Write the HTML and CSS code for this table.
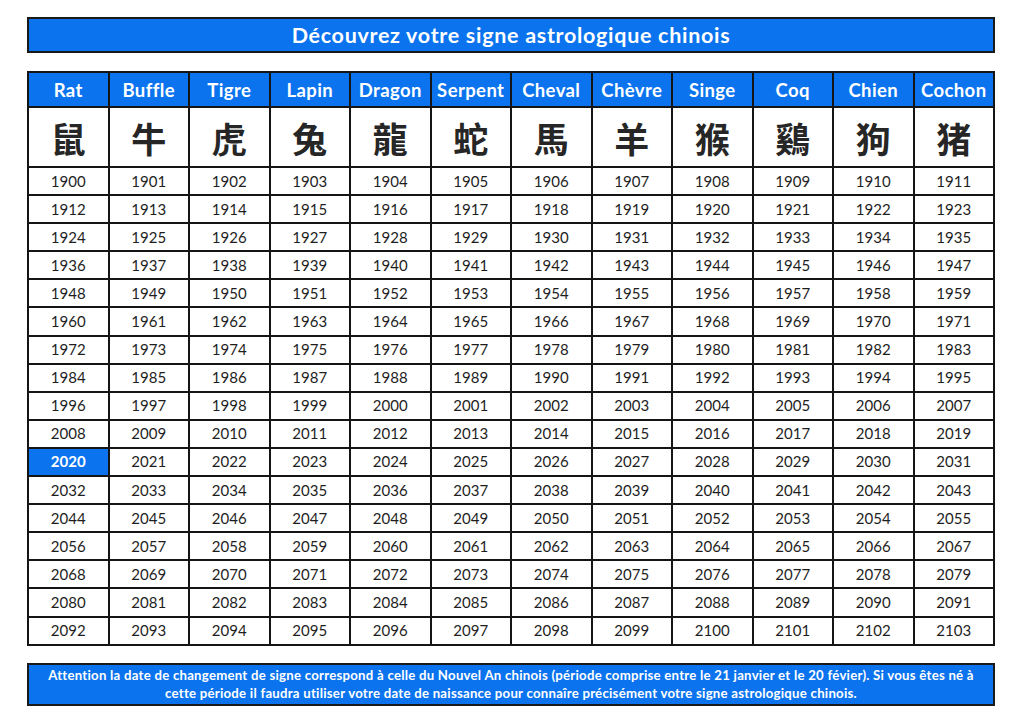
FILE: index.html
```html
<!DOCTYPE html>
<html lang="fr">
<head>
<meta charset="utf-8">
<title>Découvrez votre signe astrologique chinois</title>
<link rel="stylesheet" href="styles.css">
</head>
<body>
<div class="page">
  <h1 class="title">Découvrez votre signe astrologique chinois</h1>
  <table class="zodiac">
    <thead>
      <tr class="names">
        <th>Rat</th><th>Buffle</th><th>Tigre</th><th>Lapin</th><th>Dragon</th><th>Serpent</th><th>Cheval</th><th>Chèvre</th><th>Singe</th><th>Coq</th><th>Chien</th><th>Cochon</th>
      </tr>
      <tr class="hanzi">
        <td>鼠</td><td>牛</td><td>虎</td><td>兔</td><td>龍</td><td>蛇</td><td>馬</td><td>羊</td><td>猴</td><td>鷄</td><td>狗</td><td>猪</td>
      </tr>
    </thead>
    <tbody>
      <tr><td>1900</td><td>1901</td><td>1902</td><td>1903</td><td>1904</td><td>1905</td><td>1906</td><td>1907</td><td>1908</td><td>1909</td><td>1910</td><td>1911</td></tr>
      <tr><td>1912</td><td>1913</td><td>1914</td><td>1915</td><td>1916</td><td>1917</td><td>1918</td><td>1919</td><td>1920</td><td>1921</td><td>1922</td><td>1923</td></tr>
      <tr><td>1924</td><td>1925</td><td>1926</td><td>1927</td><td>1928</td><td>1929</td><td>1930</td><td>1931</td><td>1932</td><td>1933</td><td>1934</td><td>1935</td></tr>
      <tr><td>1936</td><td>1937</td><td>1938</td><td>1939</td><td>1940</td><td>1941</td><td>1942</td><td>1943</td><td>1944</td><td>1945</td><td>1946</td><td>1947</td></tr>
      <tr><td>1948</td><td>1949</td><td>1950</td><td>1951</td><td>1952</td><td>1953</td><td>1954</td><td>1955</td><td>1956</td><td>1957</td><td>1958</td><td>1959</td></tr>
      <tr><td>1960</td><td>1961</td><td>1962</td><td>1963</td><td>1964</td><td>1965</td><td>1966</td><td>1967</td><td>1968</td><td>1969</td><td>1970</td><td>1971</td></tr>
      <tr><td>1972</td><td>1973</td><td>1974</td><td>1975</td><td>1976</td><td>1977</td><td>1978</td><td>1979</td><td>1980</td><td>1981</td><td>1982</td><td>1983</td></tr>
      <tr><td>1984</td><td>1985</td><td>1986</td><td>1987</td><td>1988</td><td>1989</td><td>1990</td><td>1991</td><td>1992</td><td>1993</td><td>1994</td><td>1995</td></tr>
      <tr><td>1996</td><td>1997</td><td>1998</td><td>1999</td><td>2000</td><td>2001</td><td>2002</td><td>2003</td><td>2004</td><td>2005</td><td>2006</td><td>2007</td></tr>
      <tr><td>2008</td><td>2009</td><td>2010</td><td>2011</td><td>2012</td><td>2013</td><td>2014</td><td>2015</td><td>2016</td><td>2017</td><td>2018</td><td>2019</td></tr>
      <tr><td class="current">2020</td><td>2021</td><td>2022</td><td>2023</td><td>2024</td><td>2025</td><td>2026</td><td>2027</td><td>2028</td><td>2029</td><td>2030</td><td>2031</td></tr>
      <tr><td>2032</td><td>2033</td><td>2034</td><td>2035</td><td>2036</td><td>2037</td><td>2038</td><td>2039</td><td>2040</td><td>2041</td><td>2042</td><td>2043</td></tr>
      <tr><td>2044</td><td>2045</td><td>2046</td><td>2047</td><td>2048</td><td>2049</td><td>2050</td><td>2051</td><td>2052</td><td>2053</td><td>2054</td><td>2055</td></tr>
      <tr><td>2056</td><td>2057</td><td>2058</td><td>2059</td><td>2060</td><td>2061</td><td>2062</td><td>2063</td><td>2064</td><td>2065</td><td>2066</td><td>2067</td></tr>
      <tr><td>2068</td><td>2069</td><td>2070</td><td>2071</td><td>2072</td><td>2073</td><td>2074</td><td>2075</td><td>2076</td><td>2077</td><td>2078</td><td>2079</td></tr>
      <tr><td>2080</td><td>2081</td><td>2082</td><td>2083</td><td>2084</td><td>2085</td><td>2086</td><td>2087</td><td>2088</td><td>2089</td><td>2090</td><td>2091</td></tr>
      <tr><td>2092</td><td>2093</td><td>2094</td><td>2095</td><td>2096</td><td>2097</td><td>2098</td><td>2099</td><td>2100</td><td>2101</td><td>2102</td><td>2103</td></tr>
    </tbody>
  </table>
  <p class="note">Attention la date de changement de signe correspond à celle du Nouvel An chinois (période comprise entre le 21 janvier et le 20 févier). Si vous êtes né à<br>cette période il faudra utiliser votre date de naissance pour connaîre précisément votre signe astrologique chinois.</p>
</div>
</body>
</html>
```

FILE: styles.css
```css
html, body {
  margin: 0;
  padding: 0;
  background: #ffffff;
}

body {
  font-family: Lato, "Noto Sans", "Liberation Sans", sans-serif;
  color: #1e1e1e;
}

.page {
  width: 968px;
  padding: 17px 0 0 27px;
}

.title {
  margin: 0;
  height: 32px;
  border: 2px solid #1a1a1a;
  background: #0b73ee;
  color: #ffffff;
  font-size: 21.5px;
  letter-spacing: 0.7px;
  font-weight: 700;
  line-height: 32px;
  text-align: center;
}

.zodiac {
  margin-top: 18px;
  width: 968px;
  table-layout: fixed;
  border-collapse: collapse;
  border: 2px solid #151515;
}

.zodiac th,
.zodiac td {
  border: 2px solid #151515;
  padding: 0;
  text-align: center;
  vertical-align: middle;
}

.names {
  height: 35px;
}

.names th {
  background: #0b73ee;
  color: #ffffff;
  font-size: 18.5px;
  letter-spacing: 0.4px;
  font-weight: 700;
}

.hanzi {
  height: 60px;
}

.hanzi td {
  font-family: "Noto Sans CJK TC", "Noto Sans CJK SC", sans-serif;
  font-size: 35px;
  font-weight: 700;
  color: #262626;
  line-height: 1;
}

.zodiac tbody tr {
  height: 28.1px;
}

.zodiac tbody td {
  font-size: 15px;
  line-height: 1;
}

.zodiac tbody td.current {
  background: #0b73ee;
  color: #ffffff;
  font-weight: 700;
}

.note {
  margin: 17px 0 0;
  height: 38px;
  border: 2px solid #1a1a1a;
  background: #0b73ee;
  color: #ffffff;
  font-size: 13.2px;
  letter-spacing: 0.25px;
  font-weight: 700;
  line-height: 18px;
  padding-top: 1px;
  box-sizing: content-box;
  text-align: center;
}
```
